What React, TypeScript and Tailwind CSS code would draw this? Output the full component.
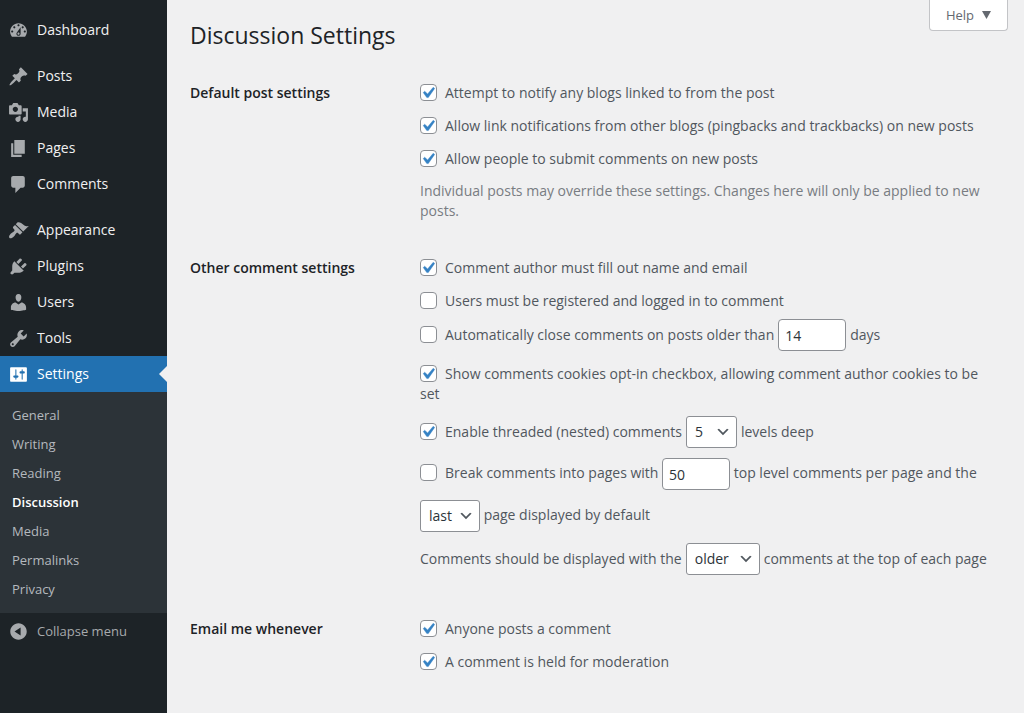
import React, { useState } from 'react';

const ICONS = {
  dashboard:
    'M3.76 16h12.48c1.1-1.37 1.76-3.11 1.76-5 0-4.42-3.58-8-8-8s-8 3.58-8 8c0 1.89.66 3.63 1.76 5zM10 4c.55 0 1 .45 1 1s-.45 1-1 1-1-.45-1-1 .45-1 1-1zM6 6c.55 0 1 .45 1 1s-.45 1-1 1-1-.45-1-1 .45-1 1-1zm8 0c.55 0 1 .45 1 1s-.45 1-1 1-1-.45-1-1 .45-1 1-1zm-5.37 5.55L12 7v6c0 1.1-.9 2-2 2s-2-.9-2-2c0-.57.24-1.08.63-1.45zM4 10c.55 0 1 .45 1 1s-.45 1-1 1-1-.45-1-1 .45-1 1-1zm12 0c.55 0 1 .45 1 1s-.45 1-1 1-1-.45-1-1 .45-1 1-1zm-5 3c0-.55-.45-1-1-1s-1 .45-1 1 .45 1 1 1 1-.45 1-1z',
  posts:
    'M10.44 3.02l1.82-1.82 6.36 6.35-1.83 1.82c-1.05-.68-2.48-.57-3.41.36l-.75.75c-.92.93-1.04 2.35-.35 3.41l-1.83 1.82-2.41-2.41-2.8 2.79c-.42.42-3.38 2.71-3.8 2.29s1.86-3.39 2.28-3.81l2.79-2.79L4.1 9.36l1.83-1.82c1.05.69 2.48.57 3.4-.36l.75-.75c.93-.92 1.05-2.35.36-3.41z',
  media:
    'M13 11V4c0-.55-.45-1-1-1h-1.67L9 1H5L3.67 3H2c-.55 0-1 .45-1 1v7c0 .55.45 1 1 1h10c.55 0 1-.45 1-1zM7 4.5c1.38 0 2.5 1.12 2.5 2.5S8.38 9.5 7 9.5 4.5 8.38 4.5 7 5.62 4.5 7 4.5zM14 6h5v10.5c0 1.38-1.12 2.5-2.5 2.5S14 17.88 14 16.5s1.12-2.5 2.5-2.5c.17 0 .34.02.5.05V9h-3V6zm-4 8.05V13h2v3.5c0 1.38-1.12 2.5-2.5 2.5S7 17.88 7 16.5 8.12 14 9.5 14c.17 0 .34.02.5.05z',
  pages: 'M6 15V2h10v13H6zm-1 1h8v2H3V5h2v11z',
  comments: 'M5 2h9c1.1 0 2 .9 2 2v7c0 1.1-.9 2-2 2h-2l-5 5v-5H5c-1.1 0-2-.9-2-2V4c0-1.1.9-2 2-2z',
  appearance:
    'M14.48 11.06L7.41 3.99l1.5-1.5c.5-.56 2.3-.47 3.51.32 1.21.8 1.43 1.28 2.91 2.1 1.18.64 2.45 1.26 4.45.85zm-.71.71L6.7 4.7 4.93 6.47c-.39.39-.39 1.02 0 1.41l1.06 1.06c.39.39.39 1.03 0 1.42-.6.6-1.43 1.11-2.21 1.69-.35.26-.7.53-1.01.84C1.43 14.23.4 16.08 1.4 17.07c.99 1 2.84-.03 4.18-1.36.31-.31.58-.66.85-1.02.57-.78 1.08-1.61 1.69-2.21.39-.39 1.02-.39 1.41 0l1.06 1.06c.39.39 1.02.39 1.41 0z',
  plugins:
    'M13.11 4.36L9.87 7.6 8 5.73l3.24-3.24c.35-.34 1.05-.2 1.56.32.52.51.66 1.21.31 1.55zm-8 1.77l.91-1.12 9.01 9.01-1.19.84c-.71.71-2.63 1.16-3.82 1.16H6.14L4.9 17.26c-.59.59-1.54.59-2.12 0-.59-.58-.59-1.53 0-2.12l1.24-1.24v-3.88c0-1.13.4-3.19 1.09-3.89zm7.26 3.97l3.24-3.24c.34-.35 1.04-.21 1.55.31.52.51.66 1.21.31 1.55l-3.24 3.25z',
  users:
    'M10 9.25c-2.27 0-2.73-3.44-2.73-3.44C7 4.02 7.82 2 9.97 2c2.16 0 2.98 2.02 2.71 3.81 0 0-.41 3.44-2.68 3.44zm0 2.57L12.72 10c2.39 0 4.52 2.33 4.52 4.53v2.49s-3.65 1.13-7.24 1.13c-3.65 0-7.24-1.13-7.24-1.13v-2.49c0-2.25 1.94-4.48 4.47-4.48z',
  tools:
    'M16.68 9.77c-1.34 1.34-3.3 1.67-4.95.99l-5.41 6.52c-.99.99-2.59.99-3.58 0s-.99-2.59 0-3.57l6.52-5.42c-.68-1.65-.35-3.61.99-4.95 1.28-1.28 3.12-1.62 4.72-1.06l-2.89 2.89 2.82 2.82 2.86-2.87c.53 1.58.18 3.39-1.08 4.65zM3.81 16.21c.4.39 1.04.39 1.43 0 .4-.4.4-1.04 0-1.43-.39-.4-1.03-.4-1.43 0-.39.39-.39 1.03 0 1.43z',
  settings:
    'M18 16V4c0-.55-.45-1-1-1H3c-.55 0-1 .45-1 1v12c0 .55.45 1 1 1h14c.55 0 1-.45 1-1zM8 11h1c.55 0 1 .45 1 1s-.45 1-1 1H8v1.5c0 .28-.22.5-.5.5s-.5-.22-.5-.5V13H6c-.55 0-1-.45-1-1s.45-1 1-1h1V5.5c0-.28.22-.5.5-.5s.5.22.5.5V11zm5-2h-1c-.55 0-1-.45-1-1s.45-1 1-1h1V5.5c0-.28.22-.5.5-.5s.5.22.5.5V7h1c.55 0 1 .45 1 1s-.45 1-1 1h-1v5.5c0 .28-.22.5-.5.5s-.5-.22-.5-.5V9z',
  collapse:
    'M10 2.16c4.33 0 7.84 3.51 7.84 7.84s-3.51 7.84-7.84 7.84S2.16 14.33 2.16 10 5.71 2.16 10 2.16zm2 11.72V6.12L6.18 9.97z',
};

type IconName = keyof typeof ICONS;

const MENU: { label: string; icon: IconName }[][] = [
  [{ label: 'Dashboard', icon: 'dashboard' }],
  [
    { label: 'Posts', icon: 'posts' },
    { label: 'Media', icon: 'media' },
    { label: 'Pages', icon: 'pages' },
    { label: 'Comments', icon: 'comments' },
  ],
  [
    { label: 'Appearance', icon: 'appearance' },
    { label: 'Plugins', icon: 'plugins' },
    { label: 'Users', icon: 'users' },
    { label: 'Tools', icon: 'tools' },
    { label: 'Settings', icon: 'settings' },
  ],
];

const SUBMENU = ['General', 'Writing', 'Reading', 'Discussion', 'Media', 'Permalinks', 'Privacy'];

const Icon: React.FC<{ name: IconName }> = ({ name }) => (
  <svg viewBox="0 0 20 20" className="size-[21px] shrink-0 fill-current" fillRule="evenodd" aria-hidden="true">
    <path d={ICONS[name]} />
  </svg>
);

const Sidebar: React.FC = () => (
  <nav className="w-[167px] shrink-0 bg-[#1d2327] pt-3 text-sm text-[#f0f0f1]">
    <div className="flex flex-col gap-[10px]">
      {MENU.map((group, i) => (
        <ul key={i}>
          {group.map(({ label, icon }) => {
            const current = label === 'Settings';
            return (
              <li key={label}>
                <a
                  href="#"
                  className={
                    current
                      ? 'relative flex h-9 items-center gap-2 bg-[#2271b1] pl-2 text-white'
                      : 'flex h-9 items-center gap-2 pl-2 hover:text-[#72aee6]'
                  }
                >
                  <span className={current ? 'text-white' : 'text-[#a7aaad]'}>
                    <Icon name={icon} />
                  </span>
                  {label}
                  {current && (
                    <span className="absolute top-1/2 right-0 -translate-y-1/2 border-8 border-l-0 border-transparent border-r-[#f0f0f1]" />
                  )}
                </a>
              </li>
            );
          })}
        </ul>
      ))}
    </div>
    <ul className="bg-[#2c3338] py-[9px] text-[13px] text-[#b4b9be]">
      {SUBMENU.map((label) => (
        <li key={label}>
          <a
            href="#"
            className={
              label === 'Discussion'
                ? 'flex h-[29px] items-center pl-3 font-semibold text-white'
                : 'flex h-[29px] items-center pl-3 hover:text-[#72aee6]'
            }
          >
            {label}
          </a>
        </li>
      ))}
    </ul>
    <button type="button" className="flex h-9 w-full items-center gap-2 pl-2 text-[13px] text-[#a7aaad]">
      <Icon name="collapse" />
      Collapse menu
    </button>
  </nav>
);

const Checkbox: React.FC<{ id: string; defaultChecked?: boolean }> = ({ id, defaultChecked = false }) => {
  const [checked, setChecked] = useState(defaultChecked);

  return (
    <span className="relative mr-2 inline-block size-[17px] align-[-3px]">
      <input
        id={id}
        type="checkbox"
        checked={checked}
        onChange={(e) => setChecked(e.target.checked)}
        className="block size-[17px] appearance-none rounded-[4px] border border-[#8c8f94] bg-white"
      />
      {checked && (
        <svg
          viewBox="0 0 17 17"
          className="pointer-events-none absolute inset-0 fill-[#3582c4] stroke-[#3582c4]"
          aria-hidden="true"
        >
          <path
            strokeWidth="0.4"
            d="M13.2 3.3l1.5 1.1-6.4 9.2H6.8L3.2 8.6l1.5-1.4 2.9 2.7z"
          />
        </svg>
      )}
    </span>
  );
};

const CheckRow: React.FC<{ id: string; checked?: boolean; children: React.ReactNode }> = ({
  id,
  checked,
  children,
}) => (
  <div>
    <Checkbox id={id} defaultChecked={checked} />
    <label htmlFor={id}>{children}</label>
  </div>
);

const NumberBox: React.FC<{ label: string; value: string }> = ({ label, value }) => (
  <input
    type="text"
    inputMode="numeric"
    aria-label={label}
    defaultValue={value}
    className="h-8 w-[68px] rounded-[4px] border border-[#8c8f94] bg-white px-1.5 align-middle leading-5 text-[#2c3338]"
  />
);

const Select: React.FC<{ label: string; value: string; options: string[]; width: string }> = ({
  label,
  value,
  options,
  width,
}) => (
  <span className={`inline-grid items-center align-middle ${width}`}>
    <select
      aria-label={label}
      defaultValue={value}
      className="col-start-1 row-start-1 h-8 w-full appearance-none rounded-[3px] border border-[#8c8f94] bg-white pr-6 pl-2 leading-5 text-[#2c3338]"
    >
      {options.map((o) => (
        <option key={o}>{o}</option>
      ))}
    </select>
    <svg
      viewBox="0 0 20 20"
      className="pointer-events-none col-start-1 row-start-1 mr-1.5 size-4 justify-self-end fill-[#50575e]"
      aria-hidden="true"
    >
      <path d="M5 6l5 5 5-5 2 1-7 7-7-7 2-1z" />
    </svg>
  </span>
);

const Section: React.FC<{ title: string; children: React.ReactNode }> = ({ title, children }) => (
  <section className="flex">
    <h2 className="w-[230px] shrink-0 font-semibold text-[#1d2327]">{title}</h2>
    <div className="min-w-0 flex-1">{children}</div>
  </section>
);

export default function App() {
  return (
    <div className="flex min-h-screen bg-[#f0f0f1] font-['Open_Sans','Noto_Sans',sans-serif]">
      <Sidebar />
      <main className="min-w-0 flex-1 pr-4 pb-10 pl-[23px] text-sm leading-5 text-[#50575e]">
        <header className="flex items-start justify-between">
          <h1 className="pt-5 text-[23px] leading-[30px] text-[#1d2327]">Discussion Settings</h1>
          <button
            type="button"
            className="flex h-[31px] items-center gap-2 rounded-b-[4px] border border-t-0 border-[#c3c4c7] bg-white px-4 text-[13px] text-[#646970]"
          >
            Help
            <svg viewBox="0 0 9 8" className="h-2 w-[9px] fill-[#646970]" aria-hidden="true">
              <path d="M0 0h9L4.5 8z" />
            </svg>
          </button>
        </header>

        <form className="flex flex-col pt-[33px] pr-2">
          <Section title="Default post settings">
            <div className="flex flex-col gap-[13px]">
              <CheckRow id="notify" checked>
                Attempt to notify any blogs linked to from the post
              </CheckRow>
              <CheckRow id="pings" checked>
                Allow link notifications from other blogs (pingbacks and trackbacks) on new posts
              </CheckRow>
              <CheckRow id="comments" checked>
                Allow people to submit comments on new posts
              </CheckRow>
            </div>
            <p className="mt-3 text-[#787c82]">
              Individual posts may override these settings. Changes here will only be applied to new posts.
            </p>
          </Section>

          <div className="pt-[37px]">
            <Section title="Other comment settings">
              <div className="flex flex-col gap-[13px]">
                <CheckRow id="author" checked>
                  Comment author must fill out name and email
                </CheckRow>
                <CheckRow id="registered">Users must be registered and logged in to comment</CheckRow>
              </div>
              <div className="mt-2 flex h-8 items-center gap-1">
                <CheckRow id="close">Automatically close comments on posts older than</CheckRow>
                <NumberBox label="Days before comments close" value="14" />
                days
              </div>
              <div className="mt-[13px]">
                <CheckRow id="cookies" checked>
                  Show comments cookies opt-in checkbox, allowing comment author cookies to be set
                </CheckRow>
              </div>
              <div className="mt-3 flex h-8 items-center gap-1">
                <CheckRow id="threaded" checked>
                  Enable threaded (nested) comments
                </CheckRow>
                <Select
                  label="Levels deep"
                  value="5"
                  options={['2', '3', '4', '5', '6', '7', '8', '9', '10']}
                  width="w-[51px]"
                />
                levels deep
              </div>
              <div className="mt-1 leading-[42px]">
                <Checkbox id="paged" />
                <label htmlFor="paged">Break comments into pages with</label>{' '}
                <NumberBox label="Comments per page" value="50" /> top level comments per page and the{' '}
                <Select label="Default page" value="last" options={['first', 'last']} width="w-[60px]" /> page
                displayed by default
              </div>
              <div className="mt-[7px] flex h-8 items-center gap-1">
                Comments should be displayed with the
                <Select label="Comment order" value="older" options={['older', 'newer']} width="w-[74px]" />
                comments at the top of each page
              </div>
            </Section>
          </div>

          <div className="pt-11">
            <Section title="Email me whenever">
              <div className="flex flex-col gap-[13px]">
                <CheckRow id="mail-post" checked>
                  Anyone posts a comment
                </CheckRow>
                <CheckRow id="mail-held" checked>
                  A comment is held for moderation
                </CheckRow>
              </div>
            </Section>
          </div>
        </form>
      </main>
    </div>
  );
}
